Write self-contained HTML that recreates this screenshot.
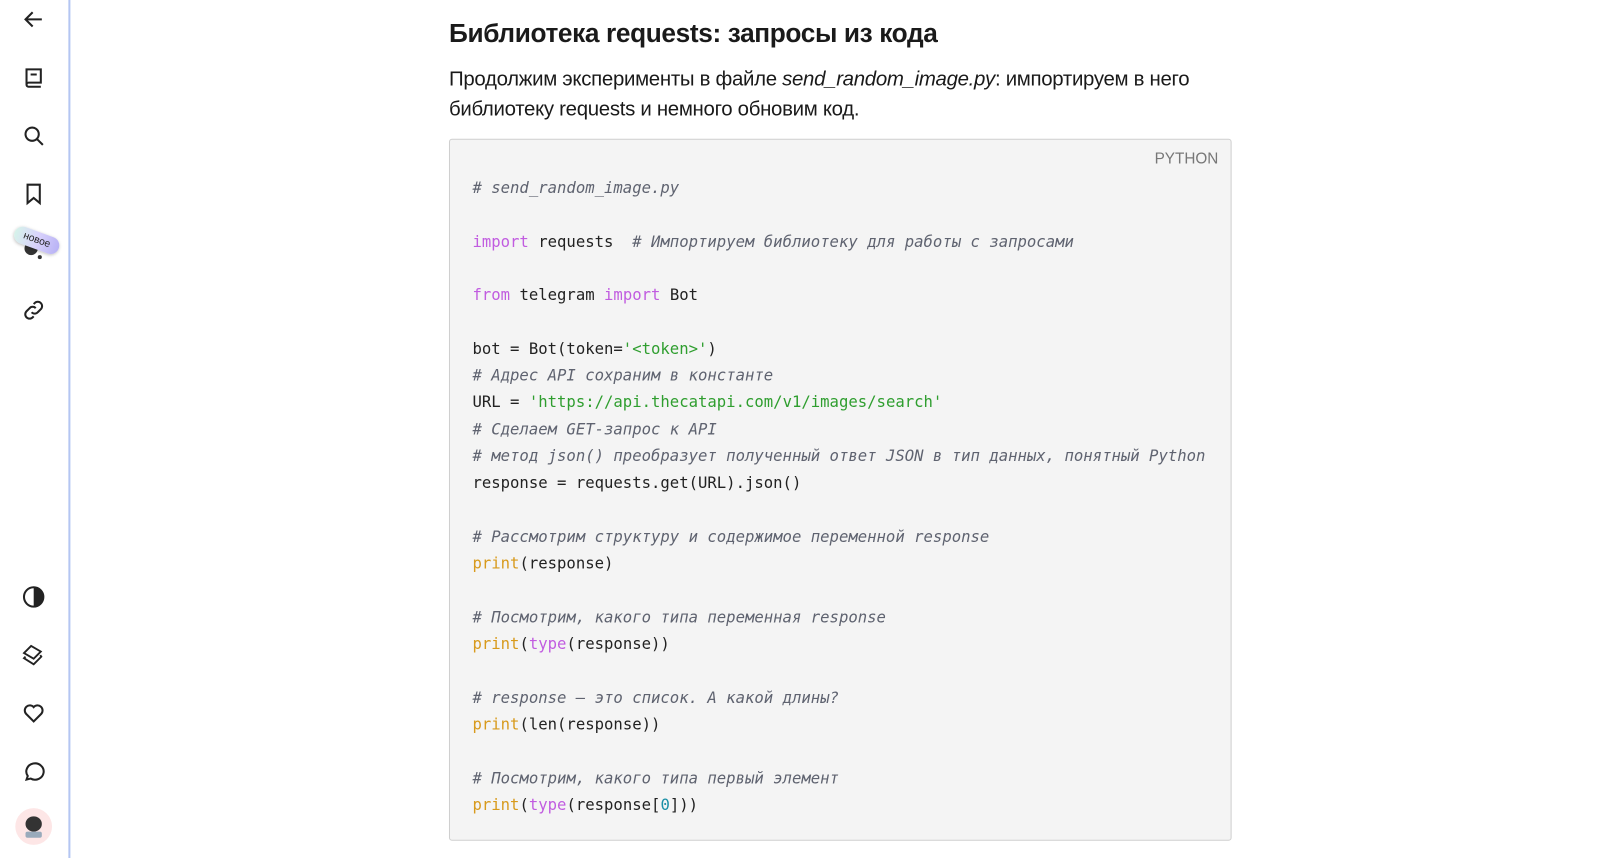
<!DOCTYPE html>
<html><head><meta charset="utf-8"><style>
body{margin:0;width:1600px;height:858px;background:#fff;overflow:hidden;font-family:"Liberation Sans",sans-serif;color:#1a1a1a;position:relative}
#w{position:absolute;left:0;top:0;width:1568px;height:841px;transform:scale(1.0204);transform-origin:0 0}
.side{position:absolute;left:0;top:0;width:67px;height:841px;border-right:2px solid #b4c6f2}
.ic{position:absolute;left:21px;width:24px;height:24px}
h1{position:absolute;left:440px;top:19px;margin:0;font-size:25.7px;font-weight:bold;letter-spacing:-0.35px}
p{position:absolute;left:440px;top:64px;margin:0;font-size:20px;line-height:29px;width:780px;letter-spacing:-0.3px}
.code{position:absolute;left:440px;top:136px;width:765px;height:686px;background:#f4f4f4;border:1px solid #cfcfcf;border-radius:3px}
.lang{position:absolute;right:12px;top:10px;font-size:15px;color:#777}
pre{position:absolute;left:22px;top:34px;margin:0;font-family:"DejaVu Sans Mono","Liberation Mono",monospace;font-size:15.3px;line-height:26.3px;color:#222}
.c{color:#5f6370;font-style:italic}.k{color:#c15ce0}.s{color:#2f9e2f}.f{color:#d89a1c}.n{color:#1a8fa6}
</style></head><body><div id="w">
<div class="side">
<svg class="ic" style="top:7px" viewBox="0 0 24 24" fill="none" stroke="#222" stroke-width="2"><path d="M20 12H5M11 5l-7 7 7 7"/></svg>
<svg class="ic" style="top:64px" viewBox="0 0 24 24" fill="none" stroke="#222" stroke-width="2"><path d="M5 19V4h14v13H7a2 2 0 0 0 0 4h12M9 9h6"/></svg>
<svg class="ic" style="top:121px" viewBox="0 0 24 24" fill="none" stroke="#222" stroke-width="2"><circle cx="10.5" cy="10.5" r="6.5"/><path d="M15.5 15.5L21 21"/></svg>
<svg class="ic" style="top:178px" viewBox="0 0 24 24" fill="none" stroke="#222" stroke-width="2"><path d="M6 3h12v18l-6-5-6 5z"/></svg>
<div style="position:absolute;left:24px;top:237px;width:13px;height:13px;border-radius:50%;background:#333"></div>
<div style="position:absolute;left:37px;top:250px;width:4px;height:4px;border-radius:50%;background:#333"></div>
<div style="position:absolute;left:13px;top:227px;width:46px;height:17px;border-radius:9px;background:linear-gradient(90deg,#d6f3ea,#d9d2fb,#b8b2f5);transform:rotate(20deg);font-size:10px;text-align:center;line-height:17px;color:#222;box-shadow:0 1px 3px rgba(0,0,0,.25)">новое</div>
<svg class="ic" style="top:292px" viewBox="0 0 24 24" fill="none" stroke="#222" stroke-width="2"><path d="M10 14a4 4 0 0 0 6 0l3-3a4 4 0 0 0-6-6l-1 1M14 10a4 4 0 0 0-6 0l-3 3a4 4 0 0 0 6 6l1-1"/></svg>
<svg class="ic" style="top:573px" viewBox="0 0 24 24"><circle cx="12" cy="12" r="9.5" fill="none" stroke="#222" stroke-width="2"/><path d="M12 2.5a9.5 9.5 0 0 1 0 19z" fill="#222"/></svg>
<svg class="ic" style="top:630px" viewBox="0 0 24 24" fill="none" stroke="#222" stroke-width="1.8"><path d="M2.5 10l7-7 9.5 5.5-7 7zM4 13.5l-1.5 1.5 9.5 6 7.5-7.5-1-1.5"/></svg>
<svg class="ic" style="top:687px" viewBox="0 0 24 24" fill="none" stroke="#222" stroke-width="2"><path d="M12 20l-7.5-7.5A4.5 4.5 0 0 1 12 6a4.5 4.5 0 0 1 7.5 6.5z"/></svg>
<svg class="ic" style="top:744px" viewBox="0 0 24 24" fill="none" stroke="#222" stroke-width="2"><path d="M5 20l1.2-3.5A8.5 8 0 1 1 9 19z"/></svg>
<div style="position:absolute;left:15px;top:792px;width:36px;height:36px;border-radius:50%;background:#fde6e6"></div>
<div style="position:absolute;left:25px;top:800px;width:16px;height:15px;border-radius:50%;background:#333"></div>
<div style="position:absolute;left:25px;top:815px;width:16px;height:6px;background:#9ab;border-radius:2px"></div>
</div>
<h1>Библиотека requests: запросы из кода</h1>
<p>Продолжим эксперименты в файле <i>send_random_image.py</i>: импортируем в него библиотеку requests и немного обновим код.</p>
<div class="code"><div class="lang">PYTHON</div>
<pre><span class="c"># send_random_image.py</span>

<span class="k">import</span> requests  <span class="c"># Импортируем библиотеку для работы с запросами</span>

<span class="k">from</span> telegram <span class="k">import</span> Bot

bot = Bot(token=<span class="s">'&lt;token&gt;'</span>)
<span class="c"># Адрес API сохраним в константе</span>
URL = <span class="s">'https://api.thecatapi.com/v1/images/search'</span>
<span class="c"># Сделаем GET-запрос к API</span>
<span class="c"># метод json() преобразует полученный ответ JSON в тип данных, понятный Python</span>
response = requests.get(URL).json()

<span class="c"># Рассмотрим структуру и содержимое переменной response</span>
<span class="f">print</span>(response)

<span class="c"># Посмотрим, какого типа переменная response</span>
<span class="f">print</span>(<span class="k">type</span>(response))

<span class="c"># response — это список. А какой длины?</span>
<span class="f">print</span>(len(response))

<span class="c"># Посмотрим, какого типа первый элемент</span>
<span class="f">print</span>(<span class="k">type</span>(response[<span class="n">0</span>]))</pre>
</div>
</div></body></html>
